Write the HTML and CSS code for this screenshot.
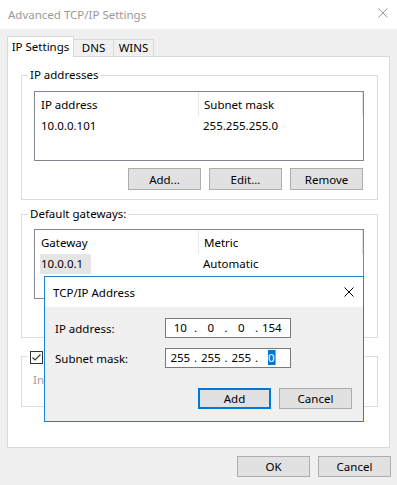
FILE: index.html
```html
<!DOCTYPE html>
<html>
<head>
<meta charset="UTF-8">
<title>Advanced TCP/IP Settings</title>
<link rel="stylesheet" href="styles.css">
</head>
<body>

	<!-- main window -->
	<div class="titlebar">
		<span class="title">Advanced TCP/IP Settings</span>
		<svg class="close" width="10" height="10" viewBox="0 0 10 10">
			<path d="M0.5 0.5 L9.5 9.5 M9.5 0.5 L0.5 9.5" stroke="#9a9a9a" stroke-width="1" fill="none"/>
		</svg>
	</div>

	<div class="tabs">
		<div class="tab active">IP Settings</div>
		<div class="tab">DNS</div>
		<div class="tab">WINS</div>
	</div>

	<div class="panel">
		<fieldset class="group first">
			<legend>IP addresses</legend>
			<div class="listbox">
				<div class="lrow head">
					<span class="col1">IP address</span>
					<span class="col2">Subnet mask</span>
				</div>
				<div class="lrow">
					<span class="col1">10.0.0.101</span>
					<span class="col2">255.255.255.0</span>
				</div>
			</div>
			<div class="btnrow">
				<button class="btn">Add...</button>
				<button class="btn">Edit...</button>
				<button class="btn">Remove</button>
			</div>
		</fieldset>

		<fieldset class="group second">
			<legend>Default gateways:</legend>
			<div class="listbox">
				<div class="lrow head">
					<span class="col1">Gateway</span>
					<span class="col2">Metric</span>
				</div>
				<div class="lrow">
					<span class="col1"><span class="sel">10.0.0.1</span></span>
					<span class="col2">Automatic</span>
				</div>
			</div>
			<!-- covered by the dialog -->
			<div class="btnrow">
				<button class="btn" aria-label="Add"></button>
				<button class="btn" aria-label="Edit"></button>
				<button class="btn" aria-label="Remove"></button>
			</div>
		</fieldset>

		<fieldset class="group third">
			<legend><span class="check"><svg width="11" height="11" viewBox="0 0 11 11"><path d="M1.5 5.5 L4 8 L9.5 2.5" stroke="#333" stroke-width="1.1" fill="none"/></svg></span></legend>
			<div class="disabled">Int</div>
		</fieldset>
	</div>

	<div class="footer">
		<button class="btn">OK</button>
		<button class="btn">Cancel</button>
	</div>

	<!-- TCP/IP Address dialog on top -->
	<div class="dialog">
		<div class="dlg-title">
			<span>TCP/IP Address</span>
			<svg width="10" height="10" viewBox="0 0 10 10">
				<path d="M0.5 0.5 L9.5 9.5 M9.5 0.5 L0.5 9.5" stroke="#000" stroke-width="1" fill="none"/>
			</svg>
		</div>
		<div class="dlg-body">
			<div class="field">
				<span class="label">IP address:</span>
				<div class="ipbox">
					<span class="seg">10</span><span class="dot">.</span><span class="seg">0</span><span class="dot">.</span><span class="seg">0</span><span class="dot">.</span><span class="seg">154</span>
				</div>
			</div>
			<div class="field">
				<span class="label">Subnet mask:</span>
				<div class="ipbox">
					<span class="seg">255</span><span class="dot">.</span><span class="seg">255</span><span class="dot">.</span><span class="seg">255</span><span class="dot">.</span><span class="seg"><span class="hilite">0</span></span>
				</div>
			</div>
			<div class="dlg-btns">
				<button class="btn default">Add</button>
				<button class="btn">Cancel</button>
			</div>
		</div>
	</div>

</body>
</html>
```

FILE: styles.css
```css
body {
	margin: 0;
	width: 397px;
	height: 485px;
	background: #f0f0f0;
	font-family: "Noto Sans", "Liberation Sans", sans-serif;
	font-size: 11.5px;
	color: #000;
	position: relative;
	overflow: hidden;
}

.titlebar {
	height: 29px;
	background: #fff;
	display: flex;
	align-items: center;
	justify-content: space-between;
	padding: 0 9px 0 8px;
}

.title {
	color: #999;
}

.close {
	margin-bottom: 3px;
}

/* tabs */
.tabs {
	display: flex;
	align-items: flex-end;
	height: 20px;
	margin-top: 7px;
	padding-left: 7px;
}

.tab {
	box-sizing: border-box;
	width: 41px;
	height: 17px;
	line-height: 16px;
	margin-left: -1px;
	border: 1px solid #d9d9d9;
	border-bottom: none;
	background: #f0f0f0;
	text-align: center;
}

.tab.active {
	width: 67px;
	height: 21px;
	line-height: 19px;
	margin-left: 0;
	margin-bottom: -1px;
	background: #fff;
	position: relative;
	z-index: 1;
}

.panel {
	box-sizing: border-box;
	height: 392px;
	margin: 0 7px;
	border: 1px solid #d9d9d9;
	background: #fff;
}

/* group boxes */
.group {
	box-sizing: border-box;
	width: 357px;
	margin: 0 0 0 13px;
	padding: 0 13px 9px 12px;
	border: 1px solid #dcdcdc;
	min-width: 0;
}

.group legend {
	margin-left: -6px;
	padding: 0 2px;
	line-height: 16px;
}

.first {
	margin-top: 10px;
}

.second {
	margin-top: 6px;
}

.third {
	margin-top: 10px;
	padding-left: 11px;
}

.third legend {
	margin-left: -5px;
	padding-right: 0;
}

.listbox {
	box-sizing: border-box;
	height: 70px;
	margin-top: 8px;
	border: 1px solid #828790;
}

.second .listbox {
	margin-top: 7px;
}

.lrow {
	display: flex;
	height: 19px;
	line-height: 20px;
}

.lrow.head {
	height: 24px;
	line-height: 26px;
	width: 327px;
	border-right: 1px solid #e3e3e3;
}

.col1 {
	box-sizing: border-box;
	width: 163px;
	padding-left: 6px;
}

.head .col1 {
	border-right: 1px solid #e8e8e8;
	width: 164px;
}

.col2 {
	padding-left: 5px;
}

.sel {
	display: inline-block;
	box-sizing: border-box;
	width: 51px;
	margin-left: -1px;
	padding-left: 1px;
	background: #e5e5e5;
}

.btnrow {
	display: flex;
	justify-content: flex-end;
	gap: 8px;
	margin-top: 7px;
	padding-right: 1px;
}

.btn {
	box-sizing: border-box;
	width: 73px;
	height: 22px;
	padding: 0;
	border: 1px solid #adadad;
	background: #e1e1e1;
	font-family: "Noto Sans", "Liberation Sans", sans-serif;
	font-size: 11.5px;
	color: #000;
}

.check {
	display: block;
	box-sizing: border-box;
	width: 13px;
	height: 13px;
	margin-top: 3px;
	border: 1px solid #333;
	background: #fff;
}

.check svg {
	display: block;
}

.disabled {
	margin-top: 8px;
	line-height: 16px;
	color: #a0a0a0;
	height: 25px;
}

.footer {
	display: flex;
	justify-content: flex-end;
	gap: 8px;
	margin-top: 8px;
	padding-right: 6px;
}

.footer .btn {
	height: 21px;
}

/* dialog window */
.dialog {
	position: absolute;
	left: 44px;
	top: 276px;
	box-sizing: border-box;
	width: 320px;
	height: 146px;
	border: 1px solid #1883d7;
	background: #f0f0f0;
}

.dlg-title {
	height: 30px;
	background: #fff;
	display: flex;
	align-items: center;
	justify-content: space-between;
	padding: 0 9px 0 8px;
}

.dlg-body {
	padding: 11px 11px 0 10px;
}

.field {
	display: flex;
	align-items: center;
	height: 20px;
	margin-bottom: 10px;
}

.label {
	width: 110px;
}

.ipbox {
	box-sizing: border-box;
	width: 126px;
	height: 20px;
	line-height: 18px;
	border: 1px solid #7a7a7a;
	background: #fff;
	display: flex;
	padding-left: 2px;
}

.seg {
	width: 24.5px;
	text-align: center;
}

.dot {
	width: 6px;
	text-align: center;
}

.hilite {
	background: #0078d7;
	color: #fff;
	border-right: 1px solid #f7931e;
}

.dlg-btns {
	display: flex;
	justify-content: flex-end;
	gap: 8px;
	margin-top: 20px;
}

.dlg-btns .btn {
	height: 21px;
}

.btn.default {
	border: 2px solid #0078d7;
}
```
